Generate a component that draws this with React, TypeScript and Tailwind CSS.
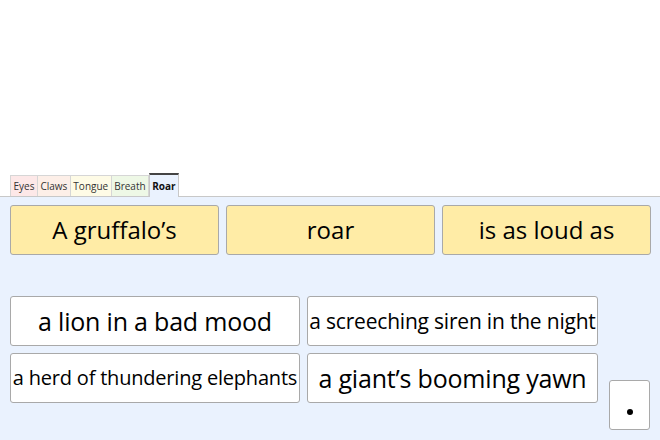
const tabs = [
  { label: 'Eyes', bg: 'bg-[#fde8e8]' },
  { label: 'Claws', bg: 'bg-[#fdefe8]' },
  { label: 'Tongue', bg: 'bg-[#fefbe6]' },
  { label: 'Breath', bg: 'bg-[#eef8e6]' },
]

export default function App() {
  return (
    <div className="flex h-[440px] w-[660px] flex-col overflow-hidden bg-white font-['Open_Sans',sans-serif] text-black">
      <div className="h-[173px]" />

      {/* Tabs */}
      <div className="relative z-10 flex h-[23px] items-end pl-[10px]">
        {tabs.map((t) => (
          <div
            key={t.label}
            className={`flex h-[21px] items-center border border-b-0 border-l-0 border-[#d6d6d6] first:border-l px-[2.5px] text-[10px] text-[#333] ${t.bg}`}
          >
            {t.label}
          </div>
        ))}
        <div className="-mb-px flex h-[24px] items-center border-x border-t-2 border-x-[#c8c8c8] border-t-[#444] bg-[#eaf2fe] px-[2px] text-[10px] font-bold text-[#111]">
          Roar
        </div>
      </div>

      {/* Panel */}
      <div className="flex-1 border-t border-[#c8c8c8] bg-[#eaf2fe] pl-[10px] pt-[8px]">
        <div className="flex gap-[7px]">
          {["A gruffalo’s", 'roar', 'is as loud as'].map((w) => (
            <div
              key={w}
              className="flex h-[50px] w-[209px] items-center justify-center rounded-[3px] border border-[#a9a9a9] bg-[#ffeca6] text-[24px] leading-none"
            >
              {w}
            </div>
          ))}
        </div>

        <div className="mt-[41px] flex items-start gap-[11px]">
          <div className="grid grid-cols-[290px_291px] gap-[7px]">
            <Card size="text-[25px]">a lion in a bad mood</Card>
            <Card size="text-[21px]">a screeching siren in the night</Card>
            <Card size="text-[20px]">a herd of thundering elephants</Card>
            <Card size="text-[25px]">a giant’s booming yawn</Card>
          </div>
          <div className="mt-[84px] flex h-[50px] w-[41px] items-end justify-center rounded-[3px] border border-[#a9a9a9] bg-white pb-[14px]">
            <span className="block h-[6px] w-[6px] rounded-full bg-black" />
          </div>
        </div>
      </div>
    </div>
  )
}

function Card({ children, size }: { children: string; size: string }) {
  return (
    <div
      className={`flex h-[50px] items-center justify-center overflow-hidden whitespace-nowrap rounded-[3px] border border-[#a9a9a9] bg-white leading-none tracking-[-0.2px] ${size}`}
    >
      {children}
    </div>
  )
}
